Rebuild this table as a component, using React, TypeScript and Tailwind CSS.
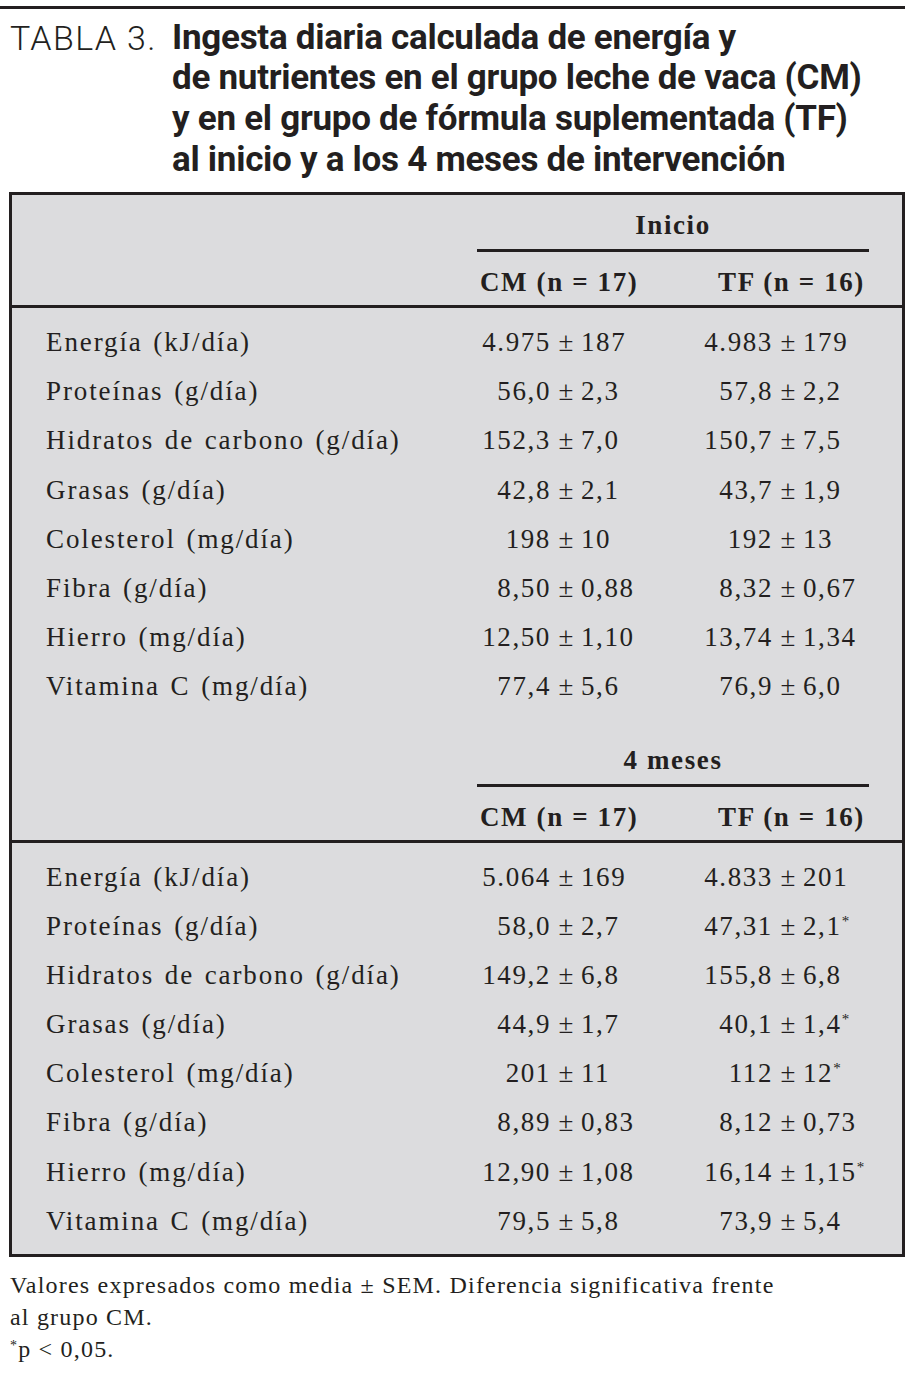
import React from "react";

type Row = { label: string; a: [string, string, boolean?]; b: [string, string, boolean?] };

const inicio: Row[] = [
  { label: "Energía (kJ/día)", a: ["4.975", "187"], b: ["4.983", "179"] },
  { label: "Proteínas (g/día)", a: ["56,0", "2,3"], b: ["57,8", "2,2"] },
  { label: "Hidratos de carbono (g/día)", a: ["152,3", "7,0"], b: ["150,7", "7,5"] },
  { label: "Grasas (g/día)", a: ["42,8", "2,1"], b: ["43,7", "1,9"] },
  { label: "Colesterol (mg/día)", a: ["198", "10"], b: ["192", "13"] },
  { label: "Fibra (g/día)", a: ["8,50", "0,88"], b: ["8,32", "0,67"] },
  { label: "Hierro (mg/día)", a: ["12,50", "1,10"], b: ["13,74", "1,34"] },
  { label: "Vitamina C (mg/día)", a: ["77,4", "5,6"], b: ["76,9", "6,0"] },
];

const meses: Row[] = [
  { label: "Energía (kJ/día)", a: ["5.064", "169"], b: ["4.833", "201"] },
  { label: "Proteínas (g/día)", a: ["58,0", "2,7"], b: ["47,31", "2,1", true] },
  { label: "Hidratos de carbono (g/día)", a: ["149,2", "6,8"], b: ["155,8", "6,8"] },
  { label: "Grasas (g/día)", a: ["44,9", "1,7"], b: ["40,1", "1,4", true] },
  { label: "Colesterol (mg/día)", a: ["201", "11"], b: ["112", "12", true] },
  { label: "Fibra (g/día)", a: ["8,89", "0,83"], b: ["8,12", "0,73"] },
  { label: "Hierro (mg/día)", a: ["12,90", "1,08"], b: ["16,14", "1,15", true] },
  { label: "Vitamina C (mg/día)", a: ["79,5", "5,8"], b: ["73,9", "5,4"] },
];

const serif = "font-['Liberation_Serif',_'Times_New_Roman',_serif]";

function Star() {
  return <span className="relative -top-[9px] text-[15px] tracking-normal">*</span>;
}

function DataRow({ r }: { r: Row }) {
  return (
    <div className="flex h-[49.15px] items-center whitespace-nowrap">
      <div className="w-[438px] shrink-0 pl-[34px] tracking-[0.07em] [word-spacing:2px]">{r.label}</div>
      <div className="w-[101px] shrink-0 text-right">{r.a[0]}</div>
      <div className="w-[30px] shrink-0 text-center tracking-normal">±</div>
      <div className="w-[94px] shrink-0">
        {r.a[1]}
        {r.a[2] ? <Star /> : null}
      </div>
      <div className="w-[98px] shrink-0 text-right">{r.b[0]}</div>
      <div className="w-[30px] shrink-0 text-center tracking-normal">±</div>
      <div className="flex-1">
        {r.b[1]}
        {r.b[2] ? <Star /> : null}
      </div>
    </div>
  );
}

function Header({ title, pt }: { title: string; pt: string }) {
  return (
    <div className={`flex ${pt}`}>
      <div className="w-[465px] shrink-0" />
      <div className="w-[392px] shrink-0 font-bold">
        <div className="h-[30px] text-center leading-[30px]">{title}</div>
        <div className="mt-[9px] h-[3px] bg-[#231f20]" />
        <div className="mt-[15px] flex h-[30px] justify-between pl-[3px] pr-[4px] leading-[30px]">
          <span>CM (n = 17)</span>
          <span>TF (n = 16)</span>
        </div>
      </div>
    </div>
  );
}

export default function App() {
  return (
    <div className="min-h-[1376px] w-[911px] bg-white pt-[6px] text-[#231f20]">
      <div className="h-[3px] w-[905px] bg-[#231f20]" />
      <div className="mt-[8.5px] flex whitespace-nowrap font-['Roboto',_sans-serif] leading-[40.7px]">
        <div className="w-[172px] shrink-0 pl-[10px] text-[34px] font-light tracking-[0.04em]">TABLA 3.</div>
        <div className="text-[35px] font-bold tracking-[-0.008em]">
          <div>Ingesta diaria calculada de energía y</div>
          <div>de nutrientes en el grupo leche de vaca (CM)</div>
          <div>y en el grupo de fórmula suplementada (TF)</div>
          <div>al inicio y a los 4 meses de intervención</div>
        </div>
      </div>

      <div
        className={`mt-[12px] ml-[9px] w-[896px] border-[3px] border-[#231f20] bg-[#dcdcde] ${serif} text-[27px] tracking-[0.06em]`}
      >
        <Header title="Inicio" pt="pt-[15px]" />
        <div className="mt-[8px] h-[3px] bg-[#231f20]" />
        <div className="pt-[9.5px]">
          {inicio.map((r) => (
            <DataRow key={r.label} r={r} />
          ))}
        </div>
        <Header title="4 meses" pt="pt-[34px]" />
        <div className="mt-[8px] h-[3px] bg-[#231f20]" />
        <div className="pt-[9.5px] pb-[8px]">
          {meses.map((r) => (
            <DataRow key={r.label} r={r} />
          ))}
        </div>
      </div>

      <div className={`mt-[12px] pl-[10px] ${serif} text-[24px] leading-[32px] tracking-[0.05em]`}>
        <div>Valores expresados como media ± SEM. Diferencia significativa frente</div>
        <div>al grupo CM.</div>
        <div>
          <span className="relative -top-[7px] text-[14px]">*</span>p &lt; 0,05.
        </div>
      </div>
    </div>
  );
}
